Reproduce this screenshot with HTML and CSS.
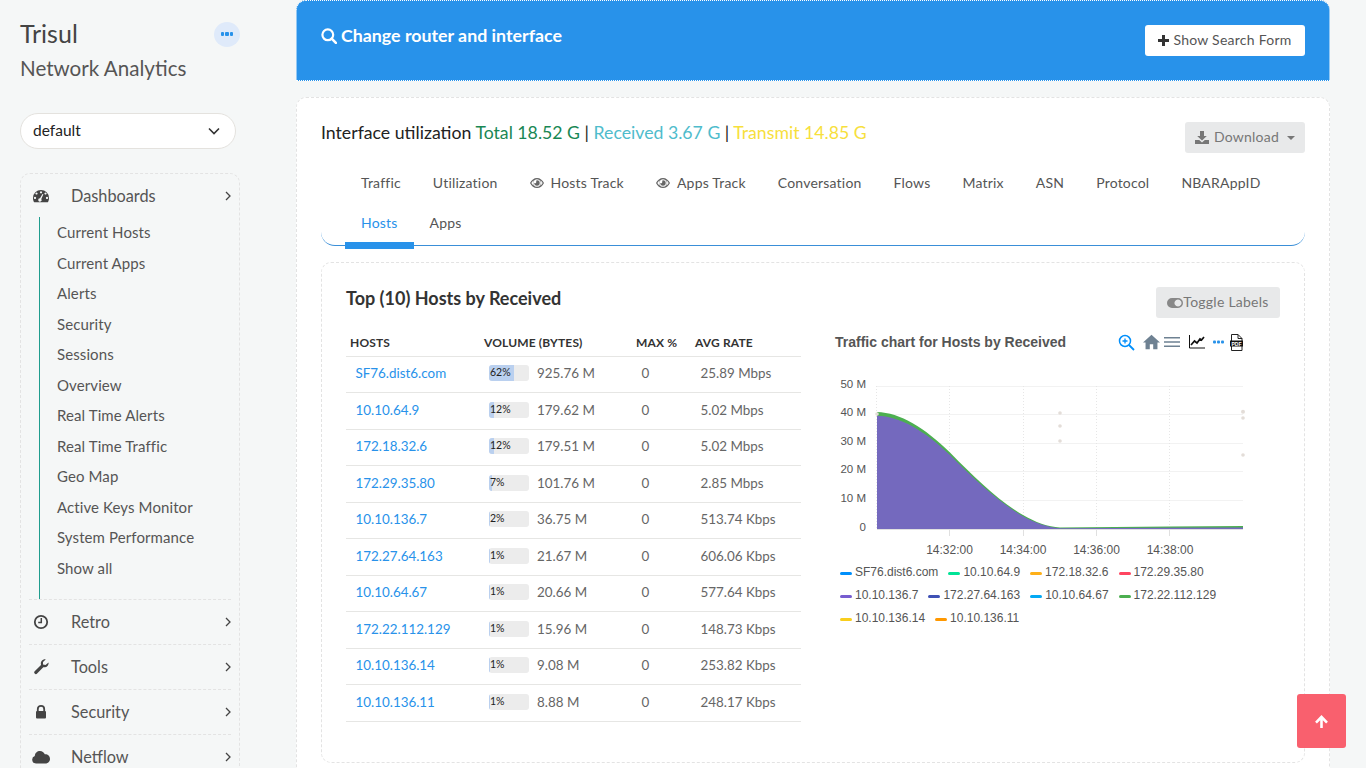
FILE: index.html
```html
<!DOCTYPE html>
<html lang="en">

<head>
    <meta charset="UTF-8">
    <title>Trisul Network Analytics</title>
    <link rel="stylesheet" href="styles.css">
</head>

<body>

    <aside class="sidebar">
        <div class="brand">
            <div class="brand-name">Trisul</div>
            <span class="brand-dots"><i></i><i></i><i></i></span>
        </div>
        <div class="brand-sub">Network Analytics</div>

        <div class="context-select">
            <span>default</span>
            <svg width="12" height="8" viewBox="0 0 12 8"><path d="M1 1.5l5 5 5-5" fill="none" stroke="#333" stroke-width="1.6"/></svg>
        </div>

        <nav class="menu">
            <div class="menu-row menu-row-first">
                <svg class="menu-icon" width="16" height="14" viewBox="0 0 16 14"><path fill-rule="evenodd" d="M8 1a8 8 0 0 1 8 8c0 1.7-.4 3.2-1.2 4.3H1.200C.4 12.200 0 10.700 0 9a8 8 0 0 1 8-8zM3.500 3.400a1.100 1.100 0 1 0 .01 0zM8 2.200a1.100 1.100 0 1 0 .01 0zM12.500 3.400a1.100 1.100 0 1 0 .01 0zM2 7.800a1.100 1.100 0 1 0 .01 0zM14 7.800a1.100 1.100 0 1 0 .01 0zM9.500 5L7 9.300a1.700 1.700 0 1 0 1.300.7l2.100-4.700z" fill="#444"/></svg>
                <span class="menu-label">Dashboards</span>
                <svg class="chevron" width="6" height="10" viewBox="0 0 6 10"><path d="M1 1l4 4-4 4" fill="none" stroke="#444" stroke-width="1.3"/></svg>
            </div>
            <ul class="submenu">
                <li>Current Hosts</li>
                <li>Current Apps</li>
                <li>Alerts</li>
                <li>Security</li>
                <li>Sessions</li>
                <li>Overview</li>
                <li>Real Time Alerts</li>
                <li>Real Time Traffic</li>
                <li>Geo Map</li>
                <li>Active Keys Monitor</li>
                <li>System Performance</li>
                <li>Show all</li>
            </ul>
            <div class="menu-row menu-row-line">
                <svg class="menu-icon" width="16" height="16" viewBox="0 0 16 16"><circle cx="8" cy="8" r="6.2" fill="none" stroke="#444" stroke-width="1.8"/><path d="M8.300 4v4.500H5.200" fill="none" stroke="#444" stroke-width="1.5"/></svg>
                <span class="menu-label">Retro</span>
                <svg class="chevron" width="6" height="10" viewBox="0 0 6 10"><path d="M1 1l4 4-4 4" fill="none" stroke="#444" stroke-width="1.3"/></svg>
            </div>
            <div class="menu-row menu-row-line">
                <svg class="menu-icon" width="16" height="16" viewBox="0 0 16 16"><path d="M15.600 3.500c.3 2.200-1.100 4.400-3.400 4.800-.7.100-1.300.1-1.900-.1l-6.200 6.400c-.7.700-1.700.7-2.400 0s-.7-1.700 0-2.400l6.300-6.300C7.300 3.300 8.500.9 10.700.4c.7-.2 1.400-.2 2 0L10 3.100v2.500l2.500.4z" fill="#444"/></svg>
                <span class="menu-label">Tools</span>
                <svg class="chevron" width="6" height="10" viewBox="0 0 6 10"><path d="M1 1l4 4-4 4" fill="none" stroke="#444" stroke-width="1.3"/></svg>
            </div>
            <div class="menu-row menu-row-line">
                <svg class="menu-icon" width="16" height="16" viewBox="0 0 16 16"><path d="M4.800 7V5a3.200 3.200 0 0 1 6.400 0v2" fill="none" stroke="#444" stroke-width="1.8"/><rect x="3" y="7" width="10" height="7.5" rx="1" fill="#444"/></svg>
                <span class="menu-label">Security</span>
                <svg class="chevron" width="6" height="10" viewBox="0 0 6 10"><path d="M1 1l4 4-4 4" fill="none" stroke="#444" stroke-width="1.3"/></svg>
            </div>
            <div class="menu-row menu-row-line">
                <svg class="menu-icon menu-icon-wide" width="18" height="14" viewBox="0 0 18 14"><path d="M4 13.500a3.800 3.800 0 0 1-1.200-7.400C2.900 3 5.200 1 8 1c2.200 0 4 1.300 4.800 3.200 2.800-.3 5.200 1.800 5.200 4.700 0 2.600-2.100 4.600-4.600 4.600z" fill="#444"/></svg>
                <span class="menu-label">Netflow</span>
                <svg class="chevron" width="6" height="10" viewBox="0 0 6 10"><path d="M1 1l4 4-4 4" fill="none" stroke="#444" stroke-width="1.3"/></svg>
            </div>
        </nav>
    </aside>

    <main class="content">

        <section class="search-head">
            <div class="search-title">
                <svg width="16" height="16" viewBox="0 0 16 16"><circle cx="6.8" cy="6.8" r="5.4" fill="none" stroke="#fff" stroke-width="2.2"/><path d="M10.700 10.700l4.200 4.200" stroke="#fff" stroke-width="2.6" stroke-linecap="round"/></svg>
                <span>Change router and interface</span>
            </div>
            <button class="btn btn-white">
                <svg width="11" height="11" viewBox="0 0 11 11"><path d="M4 0h3v4h4v3H7v4H4V7H0V4h4z" fill="#333"/></svg>
                Show Search Form
            </button>
        </section>

        <section class="card">
            <div class="card-top">
                <div class="util-title">
                    Interface utilization
                    <span class="c-total">Total 18.52 G</span> |
                    <span class="c-recv">Received 3.67 G</span> |
                    <span class="c-trans">Transmit 14.85 G</span>
                </div>
                <button class="btn btn-grey btn-download">
                    <svg width="14" height="13" viewBox="0 0 14 13"><path d="M5 0h4v5h2.800L7 9.600 2.200 5H5z" fill="#777"/><path d="M0 9h4.200L7 11.500 9.800 9H14v4H0z" fill="#777"/></svg>
                    Download
                    <span class="caret"></span>
                </button>
            </div>

            <div class="tabs">
                <a class="tab">Traffic</a>
                <a class="tab">Utilization</a>
                <a class="tab"><svg class="eye" width="14" height="10" viewBox="0 0 14 10"><path fill-rule="evenodd" d="M7 0c3 0 5.600 2 7 5-1.400 3-4 5-7 5S1.400 8 0 5c1.400-3 4-5 7-5zm0 1.200a3.800 3.800 0 1 0 .01 0zM1.300 5c.7 1.100 1.500 2 2.500 2.700A4.800 4.800 0 0 1 3.800 2.300C2.800 3 2 3.900 1.300 5zm9 2.700c1-.7 1.800-1.600 2.400-2.700-.6-1.100-1.400-2-2.400-2.700a4.800 4.800 0 0 1 0 5.400z" fill="#666"/><path d="M7 2.300a2.700 2.700 0 1 1-2.700 2.700c0-.3 1.200.5 1.700 0s-.2-2.700 1-2.700z" fill="#666"/></svg>Hosts Track</a>
                <a class="tab"><svg class="eye" width="14" height="10" viewBox="0 0 14 10"><path fill-rule="evenodd" d="M7 0c3 0 5.600 2 7 5-1.400 3-4 5-7 5S1.400 8 0 5c1.400-3 4-5 7-5zm0 1.200a3.800 3.800 0 1 0 .01 0zM1.300 5c.7 1.100 1.500 2 2.500 2.700A4.800 4.800 0 0 1 3.800 2.300C2.800 3 2 3.900 1.300 5zm9 2.700c1-.7 1.800-1.600 2.400-2.700-.6-1.100-1.400-2-2.400-2.700a4.800 4.800 0 0 1 0 5.400z" fill="#666"/><path d="M7 2.300a2.700 2.700 0 1 1-2.700 2.700c0-.3 1.200.5 1.700 0s-.2-2.700 1-2.700z" fill="#666"/></svg>Apps Track</a>
                <a class="tab">Conversation</a>
                <a class="tab">Flows</a>
                <a class="tab">Matrix</a>
                <a class="tab">ASN</a>
                <a class="tab">Protocol</a>
                <a class="tab">NBARAppID</a>
                <a class="tab tab-active">Hosts</a>
                <a class="tab">Apps</a>
            </div>

            <div class="panel">
                <div class="panel-head">
                    <h3>Top (10) Hosts by Received</h3>
                    <button class="btn btn-grey btn-toggle">
                        <svg width="16" height="10" viewBox="0 0 16 10"><path fill-rule="evenodd" d="M5 0h6a5 5 0 0 1 0 10H5A5 5 0 0 1 5 0zm0 1.500a3.500 3.500 0 1 0 .01 0z" fill="#888" transform="matrix(-1 0 0 1 16 0)"/></svg>Toggle Labels
                    </button>
                </div>

                <div class="panel-body">
                    <table class="hosts">
                        <thead>
                            <tr><th class="col-host">Hosts</th><th class="col-vol">Volume (Bytes)</th><th class="col-max">Max %</th><th>Avg Rate</th></tr>
                        </thead>
                        <tbody>
                            <tr><td><a>SF76.dist6.com</a></td><td class="td-vol"><span class="vol"><span class="bar"><span class="bar-fill" style="width:62%"></span><span class="bar-text">62%</span></span>925.76 M</span></td><td>0</td><td>25.89 Mbps</td></tr>
                            <tr><td><a>10.10.64.9</a></td><td class="td-vol"><span class="vol"><span class="bar"><span class="bar-fill" style="width:12%"></span><span class="bar-text">12%</span></span>179.62 M</span></td><td>0</td><td>5.02 Mbps</td></tr>
                            <tr><td><a>172.18.32.6</a></td><td class="td-vol"><span class="vol"><span class="bar"><span class="bar-fill" style="width:12%"></span><span class="bar-text">12%</span></span>179.51 M</span></td><td>0</td><td>5.02 Mbps</td></tr>
                            <tr><td><a>172.29.35.80</a></td><td class="td-vol"><span class="vol"><span class="bar"><span class="bar-fill" style="width:7%"></span><span class="bar-text">7%</span></span>101.76 M</span></td><td>0</td><td>2.85 Mbps</td></tr>
                            <tr><td><a>10.10.136.7</a></td><td class="td-vol"><span class="vol"><span class="bar"><span class="bar-fill" style="width:2%"></span><span class="bar-text">2%</span></span>36.75 M</span></td><td>0</td><td>513.74 Kbps</td></tr>
                            <tr><td><a>172.27.64.163</a></td><td class="td-vol"><span class="vol"><span class="bar"><span class="bar-fill" style="width:1%"></span><span class="bar-text">1%</span></span>21.67 M</span></td><td>0</td><td>606.06 Kbps</td></tr>
                            <tr><td><a>10.10.64.67</a></td><td class="td-vol"><span class="vol"><span class="bar"><span class="bar-fill" style="width:1%"></span><span class="bar-text">1%</span></span>20.66 M</span></td><td>0</td><td>577.64 Kbps</td></tr>
                            <tr><td><a>172.22.112.129</a></td><td class="td-vol"><span class="vol"><span class="bar"><span class="bar-fill" style="width:1%"></span><span class="bar-text">1%</span></span>15.96 M</span></td><td>0</td><td>148.73 Kbps</td></tr>
                            <tr><td><a>10.10.136.14</a></td><td class="td-vol"><span class="vol"><span class="bar"><span class="bar-fill" style="width:1%"></span><span class="bar-text">1%</span></span>9.08 M</span></td><td>0</td><td>253.82 Kbps</td></tr>
                            <tr><td><a>10.10.136.11</a></td><td class="td-vol"><span class="vol"><span class="bar"><span class="bar-fill" style="width:1%"></span><span class="bar-text">1%</span></span>8.88 M</span></td><td>0</td><td>248.17 Kbps</td></tr>
                        </tbody>
                    </table>

                    <div class="chart">
                        <div class="chart-head">
                            <span class="chart-title">Traffic chart for Hosts by Received</span>
                            <div class="chart-tools">
                                <svg width="17" height="17" viewBox="0 0 17 17"><circle cx="7" cy="7" r="5.5" fill="none" stroke="#008ffb" stroke-width="1.5"/><path d="M11 11l5 5" stroke="#008ffb" stroke-width="1.8"/><path d="M7 4.500v5M4.500 7h5" stroke="#008ffb" stroke-width="1.3"/></svg>
                                <svg class="tool-home" width="17" height="16" viewBox="2 3 20 17"><path d="M10 20v-6h4v6h5v-8h3L12 3 2 12h3v8z" fill="#6e8192"/></svg>
                                <svg class="tool-menu" width="16" height="12" viewBox="0 0 16 12"><path d="M0 1h16v1.600H0zM0 5.200h16v1.600H0zM0 9.400h16V11H0z" fill="#6e8192"/></svg>
                                <svg class="tool-line" width="16" height="14" viewBox="0 0 16 14"><path d="M.5 0v13h15.500" fill="none" stroke="#111" stroke-width="1"/><path d="M2 10l3.500-4 2.500 2 3-4 1.500 1L15 2" fill="none" stroke="#111" stroke-width="1.7"/></svg>
                                <svg class="tool-dots" width="11" height="4" viewBox="0 0 11 4"><rect y=".5" width="3" height="3" rx="1" fill="#2892ea"/><rect x="4" y=".5" width="3" height="3" rx="1" fill="#2892ea"/><rect x="8" y=".5" width="3" height="3" rx="1" fill="#2892ea"/></svg>
                                <svg class="tool-pdf" width="13" height="17" viewBox="0 0 13 17"><path d="M1.500.5h6.500l4 4v12H1.500z" fill="#fff" stroke="#222"/><path d="M8 .5v4h4" fill="none" stroke="#222"/><rect y="6.500" width="13" height="6" fill="#111"/><text x="6.500" y="11.500" text-anchor="middle" class="pdf-text">PDF</text></svg>
                            </div>
                        </div>

                        <svg class="plot" width="420" height="191" viewBox="835 370 420 191">
                            <path class="grid-h" d="M877 386.500H1243M877 414.500H1243M877 443.500H1243M877 471.500H1243M877 500.500H1243"/>
                            <path class="grid-v" d="M876.500 386V529M949.500 386V529M1023.500 386V529M1096.500 386V529M1169.500 386V529"/>
                            <path d="M877 412C900 412.500 925 428 950 452.500C975 478 1000 502 1023 515C1035 522 1048 527 1060 527.500L1170 526.500L1243 526L1243 529L877 529Z" fill="#4caf50"/>
                            <path d="M877 415.700C900 416 925 431 950 455C975 480 1000 503 1023 516.300C1035 523 1048 527.500 1060 528.300L1170 527.800L1243 527.500L1243 529L877 529Z" fill="#7469be"/>
                            <g class="stray">
                                <circle cx="877" cy="414" r="1.8"/><circle cx="1060" cy="413" r="1.8"/><circle cx="1060" cy="426" r="1.8"/><circle cx="1060" cy="441" r="1.8"/><circle cx="1243" cy="411.700" r="2"/><circle cx="1243" cy="418" r="1.8"/><circle cx="1243" cy="455" r="1.8"/>
                            </g>
                            <path class="axis" d="M877 529.500H1243M949.500 530V536M1023.500 530V536M1096.500 530V536M1169.500 530V536"/>
                            <g class="y-labels">
                                <text x="866" y="388">50 M</text>
                                <text x="866" y="416">40 M</text>
                                <text x="866" y="445">30 M</text>
                                <text x="866" y="473">20 M</text>
                                <text x="866" y="502">10 M</text>
                                <text x="866" y="531">0</text>
                            </g>
                            <g class="x-labels">
                                <text x="949.500" y="554">14:32:00</text>
                                <text x="1023" y="554">14:34:00</text>
                                <text x="1096.500" y="554">14:36:00</text>
                                <text x="1170" y="554">14:38:00</text>
                            </g>
                        </svg>

                        <div class="legend">
                            <span class="legend-item"><i class="m1"></i>SF76.dist6.com</span>
                            <span class="legend-item"><i class="m2"></i>10.10.64.9</span>
                            <span class="legend-item"><i class="m3"></i>172.18.32.6</span>
                            <span class="legend-item"><i class="m4"></i>172.29.35.80</span>
                            <span class="legend-item"><i class="m5"></i>10.10.136.7</span>
                            <span class="legend-item"><i class="m6"></i>172.27.64.163</span>
                            <span class="legend-item"><i class="m7"></i>10.10.64.67</span>
                            <span class="legend-item"><i class="m8"></i>172.22.112.129</span>
                            <span class="legend-item"><i class="m9"></i>10.10.136.14</span>
                            <span class="legend-item"><i class="m10"></i>10.10.136.11</span>
                        </div>
                    </div>
                </div>
            </div>
        </section>
    </main>

    <a class="scroll-top">
        <svg width="15" height="15" viewBox="0 0 14 14"><path d="M7 1L1 7.200l1.700 1.700L5.800 5.800V13h2.400V5.800l3.100 3.100L13 7.200z" fill="#fff"/></svg>
    </a>

</body>

</html>
```

FILE: styles.css
```css
html,
body {
    height: 100%;
}

body {
    margin: 0;
    overflow: hidden;
    display: flex;
    background-color: #f5f7f7;
    font-family: Lato, "Open Sans", sans-serif;
    color: #555;
}

/* sidebar */
.sidebar {
    width: 220px;
    flex: none;
    padding: 20px 20px 0;
}

.brand {
    display: flex;
    justify-content: space-between;
    align-items: center;
    height: 28px;
}

.brand-name {
    font-size: 25px;
    line-height: 28px;
    padding-bottom: 3px;
    color: #444;
}

.brand-dots {
    width: 26px;
    height: 25px;
    border-radius: 50%;
    background-color: #dfeafa;
    display: flex;
    justify-content: center;
    align-items: center;
    gap: 1px;
}

.brand-dots i {
    width: 3.5px;
    height: 4px;
    border-radius: 1px;
    background-color: #2892ea;
}

.brand-sub {
    font-size: 20.6px;
    line-height: 28px;
    margin-top: 6px;
    color: #555;
}

.context-select {
    width: 216px;
    height: 36px;
    box-sizing: border-box;
    margin-top: 31px;
    padding: 0 15px 0 12px;
    display: flex;
    justify-content: space-between;
    align-items: center;
    background-color: #fff;
    border: 1px solid #e4e2de;
    border-radius: 18px;
    font-size: 15.5px;
    color: #222;
}

.context-select span {
    padding-bottom: 2px;
}

.menu {
    margin-top: 24px;
    padding: 0 8px;
    border: 1px dashed #e3e3e3;
    border-radius: 10px;
}

.menu-row {
    height: 44px;
    display: flex;
    align-items: center;
    padding-left: 4px;
}

.menu-row-first {
    height: 43px;
}

.menu-row-line {
    border-top: 1px dashed #e3e3e3;
}

.menu-icon {
    flex: none;
}

.menu-icon-wide {
    margin: 0 -1px;
}

.menu-label {
    flex: 1;
    font-size: 16.3px;
    color: #555;
    margin-left: 22px;
    padding-bottom: 1px;
}

.chevron {
    flex: none;
}

.submenu {
    list-style: none;
    margin: 0 0 0 10px;
    padding: 0 0 16px 17px;
    border-left: 1px solid #1f9d8e;
    font-size: 15px;
    letter-spacing: .1px;
    color: #555;
}

.submenu li {
    height: 30.5px;
    line-height: 30px;
}

/* main column */
.content {
    width: 1034px;
    flex: none;
    margin-left: 36px;
}

.search-head {
    height: 81px;
    box-sizing: border-box;
    padding: 24px;
    display: flex;
    justify-content: space-between;
    align-items: flex-start;
    background-color: #2892ea;
    border: 1px dotted #fff;
    border-radius: 10px 10px 0 0;
    margin-bottom: 16px;
}

.search-title {
    font-size: 17.8px;
    font-weight: 700;
    line-height: 20px;
    color: #fff;
    display: flex;
    align-items: center;
    gap: 4px;
}

.search-title svg {
    margin-top: 2px;
}

.btn {
    font-family: inherit;
    font-size: 14px;
    letter-spacing: .25px;
    height: 31px;
    border: none;
    border-radius: 3px;
    padding: 0 0 2px;
    display: flex;
    align-items: center;
    justify-content: center;
}

.btn svg {
    margin-top: 2px;
}

.btn-white {
    width: 160px;
    gap: 4px;
    background-color: #fff;
    color: #555;
}

.btn-grey {
    background-color: #e8e9ea;
    color: #777;
}

.btn-download {
    width: 120px;
    gap: 5px;
}

.btn-toggle {
    width: 124px;
}

.caret {
    width: 0;
    height: 0;
    margin: 2px 0 0 3px;
    border-left: 4px solid transparent;
    border-right: 4px solid transparent;
    border-top: 4px solid #777;
}

.card {
    box-sizing: border-box;
    padding: 24px;
    background-color: #fff;
    border: 1px dashed #e3e3e3;
    border-radius: 10px;
}

.card-top {
    display: flex;
    justify-content: space-between;
    align-items: flex-start;
}

.util-title {
    font-size: 17.7px;
    line-height: 21px;
    color: #222;
}

.c-total {
    color: #198754;
}

.c-recv {
    color: #4fbccc;
}

.c-trans {
    color: #f7e03c;
}

/* tabs */
.tabs {
    margin-top: 10px;
    padding: 0 24px 2px;
    display: flex;
    flex-wrap: wrap;
    border-bottom: 1px solid #3a8fd8;
    border-radius: 0 0 14px 14px;
}

.tab {
    position: relative;
    height: 40px;
    line-height: 40px;
    padding: 0 16px;
    font-size: 14px;
    letter-spacing: .2px;
    color: #555;
    display: flex;
    align-items: center;
}

.eye {
    margin-right: 7px;
}

.tab-active {
    color: #2892ea;
}

.tab-active::after {
    content: "";
    position: absolute;
    left: 0;
    right: 0;
    bottom: -6px;
    height: 7px;
    background-color: #2892ea;
}

/* hosts panel */
.panel {
    margin-top: 16px;
    padding: 24px;
    height: 501px;
    box-sizing: border-box;
    border: 1px dashed #e3e3e3;
    border-radius: 10px;
}

.panel-head {
    display: flex;
    justify-content: space-between;
    align-items: flex-start;
    margin-bottom: 12px;
}

.panel-head h3 {
    margin: 0;
    font-size: 18px;
    font-weight: 700;
    line-height: 22px;
    color: #333;
}

.panel-body {
    display: flex;
    gap: 34px;
}

.hosts {
    width: 455px;
    flex: none;
    table-layout: fixed;
    border-collapse: collapse;
    font-size: 13.4px;
    color: #666;
    align-self: flex-start;
}

.hosts th {
    height: 26px;
    padding: 0 0 0 4px;
    box-sizing: border-box;
    text-align: left;
    font-size: 12px;
    font-weight: 700;
    letter-spacing: .15px;
    text-transform: uppercase;
    color: #333;
    border-bottom: 1px solid #e6e6e4;
}

.col-host {
    width: 134px;
}

.col-vol {
    width: 152px;
}

.col-max {
    width: 59px;
}

.hosts td {
    height: 36.5px;
    box-sizing: border-box;
    padding: 0 0 2px 9.5px;
    border-bottom: 1px solid #e6e6e4;
}

.hosts .td-vol {
    padding-left: 9px;
}

.hosts a {
    color: #2892ea;
}

.vol {
    display: flex;
    align-items: center;
    gap: 8px;
}

.bar {
    position: relative;
    width: 40px;
    height: 16px;
    flex: none;
    background-color: #ececec;
    border-radius: 3px;
    overflow: hidden;
}

.bar-fill {
    display: block;
    height: 100%;
    background-color: #bad0ef;
}

.bar-text {
    position: absolute;
    left: 1px;
    top: 0;
    font-size: 10.5px;
    line-height: 15px;
    color: #222;
}

/* chart */
.chart {
    flex: 1;
    font-family: "Liberation Sans", Arial, sans-serif;
}

.chart-head {
    height: 24px;
    display: flex;
    justify-content: space-between;
    align-items: center;
    margin-bottom: 16px;
    padding-right: 37px;
}

.chart-title {
    font-size: 14px;
    font-weight: 700;
    color: #555;
}

.chart-tools {
    display: flex;
    align-items: center;
}

.tool-home {
    margin-left: 8px;
}

.tool-menu {
    margin-left: 4px;
}

.tool-line {
    margin-left: 9px;
}

.tool-dots {
    margin-left: 8px;
}

.tool-pdf {
    margin-left: 6px;
}

.pdf-text {
    font-size: 5px;
    font-weight: 700;
    fill: #fff;
}

.plot {
    display: block;
}

.plot text {
    font-size: 11.5px;
    fill: #555;
}

.grid-h {
    stroke: #f2f2f2;
    fill: none;
}

.grid-v {
    stroke: #e6e6e6;
    stroke-dasharray: 1 2;
    fill: none;
}

.stray circle {
    fill: #e3ddd8;
}

.axis {
    stroke: #e0e0e0;
    fill: none;
}

.y-labels text {
    text-anchor: end;
}

.x-labels text {
    text-anchor: middle;
    font-size: 12px;
}

.legend {
    display: flex;
    flex-wrap: wrap;
    width: 420px;
    padding-left: 5px;
    box-sizing: border-box;
}

.legend-item {
    height: 23px;
    line-height: 23px;
    display: flex;
    align-items: center;
    margin-right: 10px;
    font-size: 12px;
    color: #555;
}

.legend-item i {
    width: 12px;
    height: 3px;
    border-radius: 2px;
    margin: 2px 3px 0 0;
}

.m1 { background-color: #008ffb; }
.m2 { background-color: #00e396; }
.m3 { background-color: #feb019; }
.m4 { background-color: #ff4560; }
.m5 { background-color: #775dd0; }
.m6 { background-color: #3f51b5; }
.m7 { background-color: #03a9f4; }
.m8 { background-color: #4caf50; }
.m9 { background-color: #f9ce1d; }
.m10 { background-color: #ff9800; }

.scroll-top {
    position: fixed;
    right: 20px;
    bottom: 20px;
    width: 49px;
    height: 54px;
    display: flex;
    justify-content: center;
    align-items: center;
    background-color: #f9606e;
    border-radius: 3px;
}
```
